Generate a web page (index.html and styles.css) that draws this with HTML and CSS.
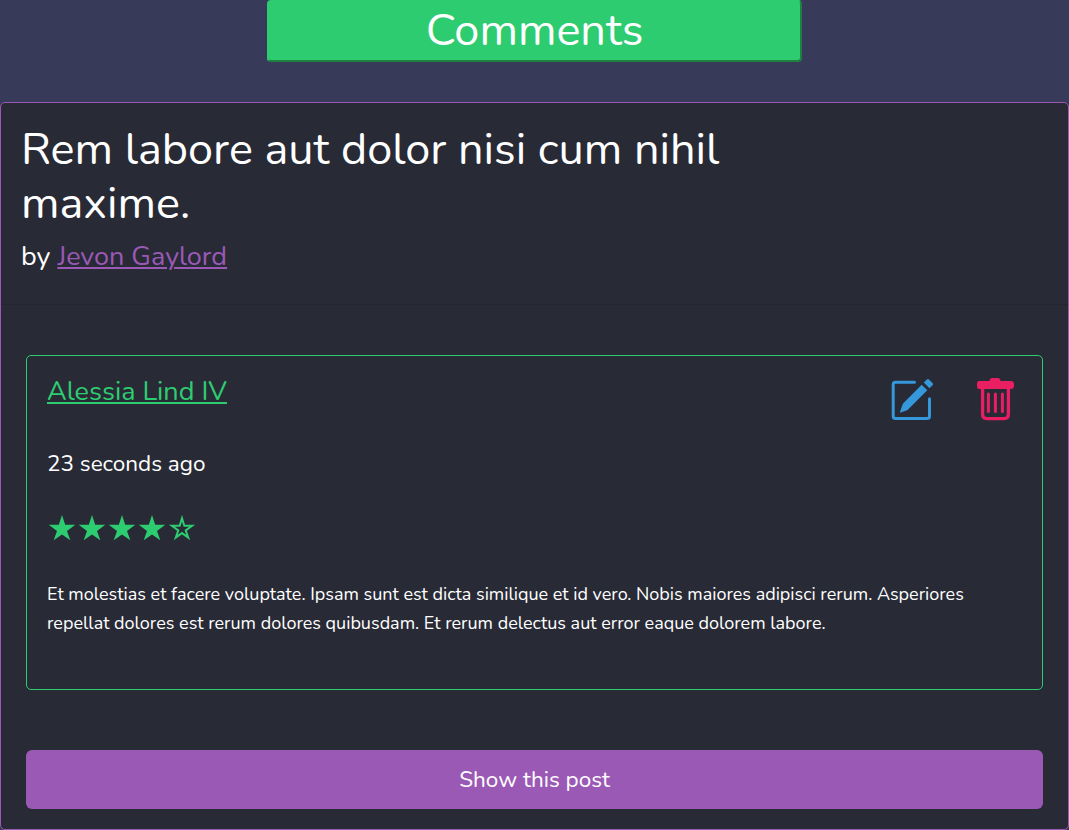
FILE: index.html
```html
<!DOCTYPE html>
<html lang="en">
<head>
<meta charset="utf-8">
<title>Comments</title>
<link rel="stylesheet" href="styles.css">
</head>
<body>
<h1 class="page-title">Comments</h1>
<main class="post">
  <header class="post-header">
    <h2 class="post-title">Rem labore aut dolor nisi cum nihil maxime.</h2>
    <p class="byline">by <a class="author" href="#">Jevon Gaylord</a></p>
  </header>
  <div class="post-body">
    <article class="comment">
      <div class="comment-head">
        <a class="commenter" href="#">Alessia Lind IV</a>
        <div class="actions">
          <svg class="icon edit" viewBox="0 0 45 45" role="img" aria-label="Edit">
            <path d="M24.5 6.2H5.500Q3.200 6.200 3.200 8.500V40.300Q3.200 42.600 5.500 42.600H37.200Q39.500 42.600 39.500 40.300V22.800" fill="none" stroke="currentColor" stroke-width="3" stroke-linecap="round"/>
            <path d="M31.700 8.700 37.300 14.300 18.300 33.300Q17.500 34.200 16.500 34.600L10.600 36.600Q9.700 36.800 10 35.900L12.200 29.500Q12.500 28.300 13.300 27.300Z" fill="currentColor"/>
            <path d="M33.800 6.600 36.900 3.500Q38 2.500 39 3.500L42.700 7.200Q43.600 8.200 42.600 9.200L39.400 12.300Z" fill="currentColor"/>
          </svg>
          <svg class="icon trash" viewBox="0 0 45 45" role="img" aria-label="Delete">
            <path d="M6 5H16.300Q17.100 2 19 2H25Q27 2 27.700 5H38Q41 5 41 8V10Q41 13 38 13H6Q4 13 4 10V8Q4 5 6 5Z" fill="currentColor"/>
            <path d="M9.600 12V38Q9.600 42.600 14 42.600H31Q35.400 42.600 35.400 38V12" fill="none" stroke="currentColor" stroke-width="3.300"/>
            <path d="M15.400 18V35.500M22.400 18V35.500M29.400 18V35.500" fill="none" stroke="currentColor" stroke-width="3" stroke-linecap="round"/>
          </svg>
        </div>
      </div>
      <p class="time">23 seconds ago</p>
      <div class="stars" role="img" aria-label="4 of 5 stars">
        <svg class="star" viewBox="0 0 30 30"><path d="M15 1 18.200 10.800H28.300L20 16.900 23.300 26.200 15 20.400 6.700 26.200 10 16.900 1.700 10.800H11.800Z"/></svg>
        <svg class="star" viewBox="0 0 30 30"><path d="M15 1 18.200 10.800H28.300L20 16.900 23.300 26.200 15 20.400 6.700 26.200 10 16.900 1.700 10.800H11.800Z"/></svg>
        <svg class="star" viewBox="0 0 30 30"><path d="M15 1 18.200 10.800H28.300L20 16.900 23.300 26.200 15 20.400 6.700 26.200 10 16.900 1.700 10.800H11.800Z"/></svg>
        <svg class="star" viewBox="0 0 30 30"><path d="M15 1 18.200 10.800H28.300L20 16.900 23.300 26.200 15 20.400 6.700 26.200 10 16.900 1.700 10.800H11.800Z"/></svg>
        <svg class="star empty" viewBox="0 0 30 30"><path d="M15 4.200 17.300 11.800H25.100L18.700 16.400 21.200 23.600 15 19.100 8.800 23.600 11.300 16.400 4.900 11.800H12.700Z"/></svg>
      </div>
      <p class="text">Et molestias et facere voluptate. Ipsam sunt est dicta similique et id vero. Nobis maiores adipisci rerum. Asperiores repellat dolores est rerum dolores quibusdam. Et rerum delectus aut error eaque dolorem labore.</p>
    </article>
    <a class="show-post" href="#">Show this post</a>
  </div>
</main>
</body>
</html>
```
FILE: styles.css
```css
* { box-sizing: border-box; }
body {
  margin: 0;
  background: #383a59;
  color: #fff;
  font-family: Nunito, Lato, "Noto Sans", sans-serif;
}
h1, h2, p { margin: 0; font-weight: 400; }
.page-title {
  width: 50%;
  height: 62px;
  margin: 0 auto 40px;
  border: 2px solid #2ecc71;
  border-right-color: #1f8040;
  border-bottom-color: #1f8040;
  border-radius: 4px;
  background: #2ecc71;
  font-size: 45px;
  line-height: 58px;
  text-align: center;
}
.post {
  height: 728px;
  border: 1px solid #9b59b6;
  border-radius: 5px;
  background: #282a36;
}
.post-header {
  height: 202px;
  padding: 20px 20px 0;
  border-bottom: 1px solid #23252f;
}
.post-title {
  width: 770px;
  font-size: 45px;
  line-height: 54px;
}
.byline { margin-top: 10px; font-size: 27px; line-height: 32px; }
.author { color: #9b59b6; }
.author, .commenter { text-decoration-thickness: 2px; text-underline-offset: 2px; }
.post-body { padding: 50px 25px 0; }
.comment {
  height: 335px;
  padding: 20px;
  border: 1px solid #2ecc71;
  border-radius: 5px;
}
.comment-head { display: flex; justify-content: space-between; height: 45px; }
.commenter { color: #2ecc71; font-size: 27px; line-height: 32px; }
.actions { display: flex; gap: 38px; margin-right: 4px; }
.icon { display: block; width: 45px; height: 45px; }
.edit { color: #3498db; }
.trash { color: #e91e63; }
.time { margin-top: 25px; font-size: 22.5px; line-height: 36px; }
.stars { display: flex; height: 30px; margin-top: 32px; }
.star { width: 30px; height: 30px; fill: #2ecc71; }
.empty { fill: none; stroke: #2ecc71; stroke-width: 2; }
.text { margin-top: 36px; font-size: 18px; line-height: 29px; }
.show-post {
  display: block;
  height: 59px;
  margin-top: 60px;
  border-radius: 6px;
  background: #9b59b6;
  color: #fff;
  font-size: 22.5px;
  line-height: 59px;
  text-align: center;
  text-decoration: none;
}
```
